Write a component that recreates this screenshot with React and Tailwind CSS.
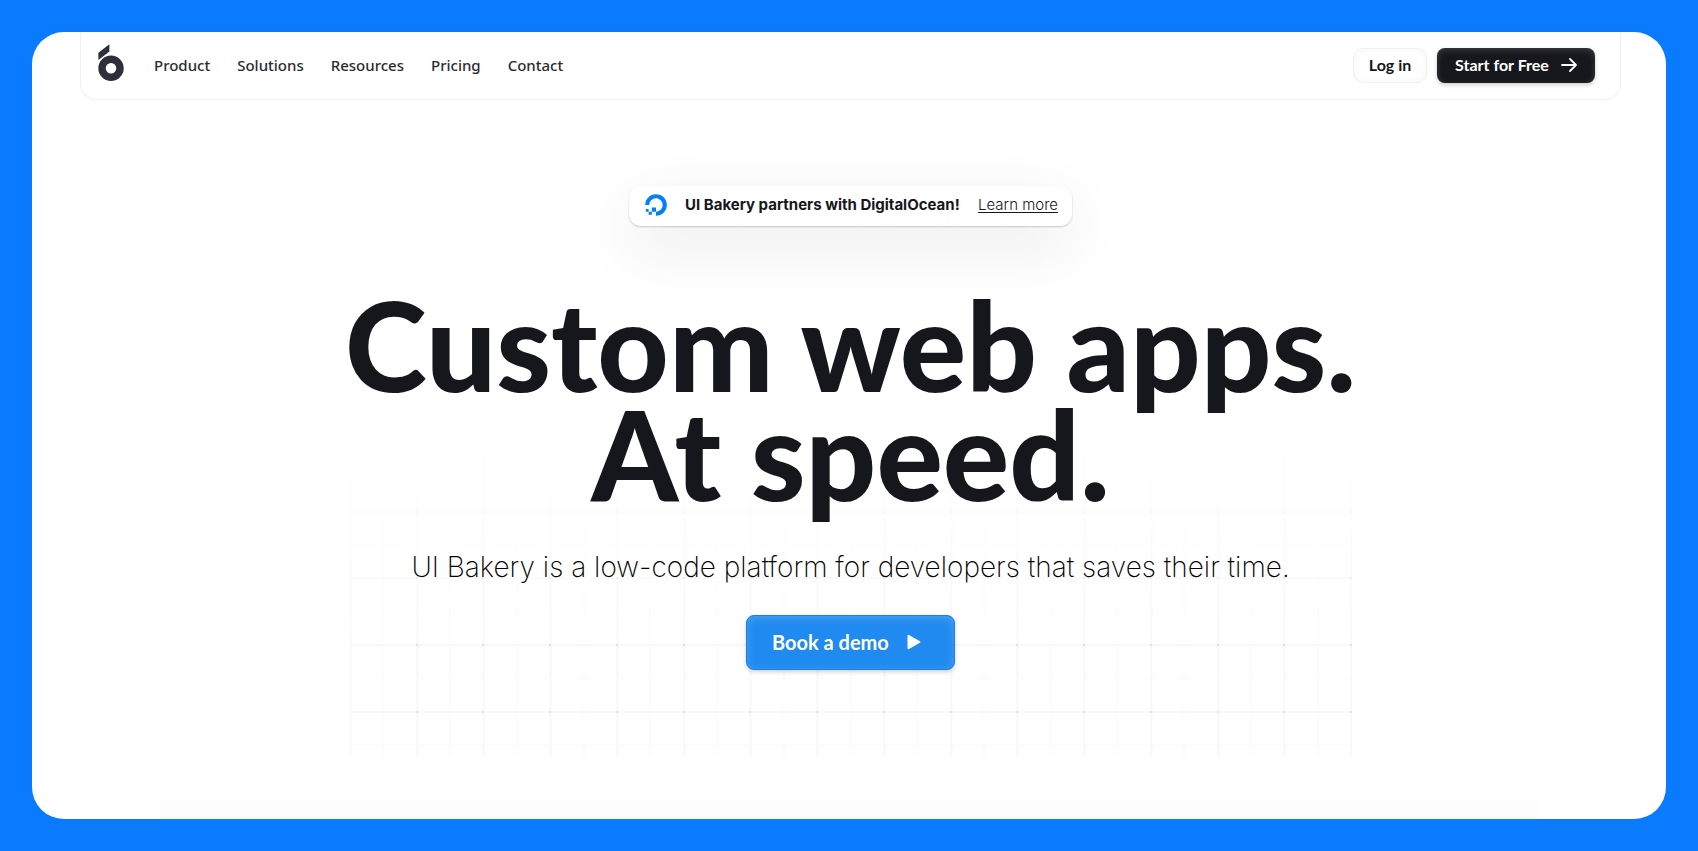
import React from "react";

const NAV = ["Product", "Solutions", "Resources", "Pricing", "Contact"];

function Logo() {
  return (
    <svg width="26" height="37" viewBox="0 0 26 37" aria-hidden="true">
      <path d="M0.400 8.800 L11.400 0.300 V7.600 L0.400 16 Z" fill="#2c303a" />
      <circle cx="13" cy="24.200" r="9" fill="none" stroke="#2c303a" strokeWidth="7.4" />
    </svg>
  );
}

function DigitalOceanMark() {
  return (
    <svg width="22" height="22" viewBox="0 0 65 65" fill="#0080ff" aria-hidden="true">
      <path d="M32.5 64.5V52.1c13.1 0 23.3-13 18.3-26.8a18.6 18.6 0 0 0-11.2-11.2C25.8 9.1 12.8 19.3 12.8 32.4H.5C.5 11.5 20.7-4.8 42.6 2a31.200 31.200 0 0 1 20.300 20.300C69.800 44.300 53.500 64.500 32.500 64.500z" />
      <path d="M20.200 39.800h12.300v12.300H20.200zM10.700 52.100h9.500v9.500h-9.500zM2.800 44.200h7.900v7.900H2.800z" />
    </svg>
  );
}

const STEP = 1001 / 15;

function GridBackdrop() {
  const columns = Array.from({ length: 31 }, (_, i) => i);
  const rows = Array.from({ length: 10 }, (_, i) => i);
  return (
    <svg
      className="pointer-events-none absolute -top-[66px] left-1/2 -translate-x-1/2"
      width="1003"
      height="314"
      viewBox="0 0 1003 314"
      aria-hidden="true"
    >
      <defs>
        <linearGradient id="fade" x1="0" y1="0" x2="0" y2="1">
          <stop offset="0" stopColor="#fff" stopOpacity="0" />
          <stop offset="0.65" stopColor="#fff" stopOpacity="1" />
        </linearGradient>
        <mask id="fadeMask">
          <rect width="1003" height="314" fill="url(#fade)" />
        </mask>
      </defs>
      <g mask="url(#fadeMask)">
        {columns.map((i) => (
          <rect
            key={"c" + i}
            x={Math.round((i * STEP) / 2)}
            y="0"
            width={i % 2 ? 1 : 2}
            height="314"
            fill={i % 2 ? "#fafafa" : "#f7f7f7"}
          />
        ))}
        {rows.map((i) => (
          <rect
            key={"r" + i}
            x="0"
            y={Math.round(2 + (i * STEP) / 2)}
            width="1003"
            height={i % 2 ? 1 : 2}
            fill={i % 2 ? "#fbfbfb" : "#f7f7f7"}
          />
        ))}
        {columns
          .filter((i) => i % 2 === 0 && i > 0)
          .map((i) =>
            rows
              .filter((j) => j % 2 === 0)
              .map((j) => (
                <rect
                  key={i + "-" + j}
                  x={Math.round((i * STEP) / 2)}
                  y={Math.round(2 + (j * STEP) / 2)}
                  width="1"
                  height="2"
                  fill="#c8c8c8"
                />
              ))
          )}
      </g>
    </svg>
  );
}

export default function App() {
  return (
    <div className="min-h-screen bg-[#0a7bff] p-8 font-[Inter,sans-serif] text-[#16171c]">
      <div className="relative min-h-[calc(100vh-64px)] overflow-hidden rounded-[32px] bg-white pr-[45px] pl-12">
        <div className="pointer-events-none absolute inset-x-32 bottom-0 h-8 bg-gradient-to-b from-white to-[#fcfcfc]" />
        <header className="flex h-[68px] items-center rounded-b-2xl border border-t-0 border-[#f0f0f0] pr-[25px] pl-[17px]">
          <a href="#" aria-label="UI Bakery" className="pb-1.5">
            <Logo />
          </a>
          <nav className="ml-[30px] flex gap-[27px] pb-0.5 font-['Noto_Sans',sans-serif] text-[15px] leading-6 font-medium text-[#2b2c31]">
            {NAV.map((item) => (
              <a key={item} href="#">
                {item}
              </a>
            ))}
          </nav>
          <div className="ml-auto flex gap-[10px] font-[Lato,sans-serif] text-base leading-5 font-bold">
            <button className="h-[35px] w-[74px] rounded-[10px] border border-[#f0f0f0] bg-white pb-0.5 shadow-[inset_0_0_8px_rgba(0,0,0,0.04)]">
              Log in
            </button>
            <button className="flex h-[35px] w-[158px] items-center justify-center gap-3 rounded-lg bg-[#17181d] pb-0.5 text-white shadow-[inset_0_2px_6px_rgba(255,255,255,0.16),0_2px_4px_rgba(0,0,0,0.2)]">
              Start for Free
              <svg width="16" height="14" viewBox="0 0 16 14" fill="none" stroke="#fff" strokeWidth="1.8" strokeLinecap="round" strokeLinejoin="round" aria-hidden="true">
                <path d="M1 7h14M9 1l6 6-6 6" />
              </svg>
            </button>
          </div>
        </header>

        <main className="flex flex-col items-center">
          <div className="mt-[86px] flex h-10 w-[443px] items-center rounded-xl bg-white pr-[14px] pb-0.5 pl-4 text-[15px] leading-6 shadow-[0_1px_2px_rgba(0,0,0,0.2),0_20px_64px_rgba(0,0,0,0.09)]">
            <DigitalOceanMark />
            <span className="ml-[18px] font-bold">UI Bakery partners with DigitalOcean!</span>
            <a href="#" className="ml-auto font-light underline underline-offset-2">
              Learn more
            </a>
          </div>

          <h1 className="relative z-10 mt-16 text-center font-[Lato,sans-serif] text-[124px] leading-[109px] font-black">
            Custom web apps.
            <br />
            At speed.
          </h1>

          <div className="relative isolate flex w-full flex-col items-center">
            <div className="absolute inset-0 -z-10">
              <GridBackdrop />
            </div>
            <p className="mt-[39px] text-[28px] leading-10 font-extralight text-black">
              UI Bakery is a low-code platform for developers that saves their time.
            </p>
            <button className="mt-7 flex h-[55px] w-[209px] items-center gap-[18px] rounded-lg border border-[#1c7fe4] bg-[#1f8aef] pb-0.5 pl-[25px] font-[Lato,sans-serif] text-xl leading-6 font-bold text-white shadow-[inset_0_2px_8px_rgba(255,255,255,0.2),0_2px_4px_rgba(0,0,0,0.18)]">
              Book a demo
              <svg width="14" height="16" viewBox="0 0 14 16" fill="#fff" stroke="#fff" strokeWidth="2" strokeLinejoin="round" aria-hidden="true">
                <path d="M1.500 1.800v12.400L12.500 8z" />
              </svg>
            </button>
          </div>
        </main>
      </div>
    </div>
  );
}
